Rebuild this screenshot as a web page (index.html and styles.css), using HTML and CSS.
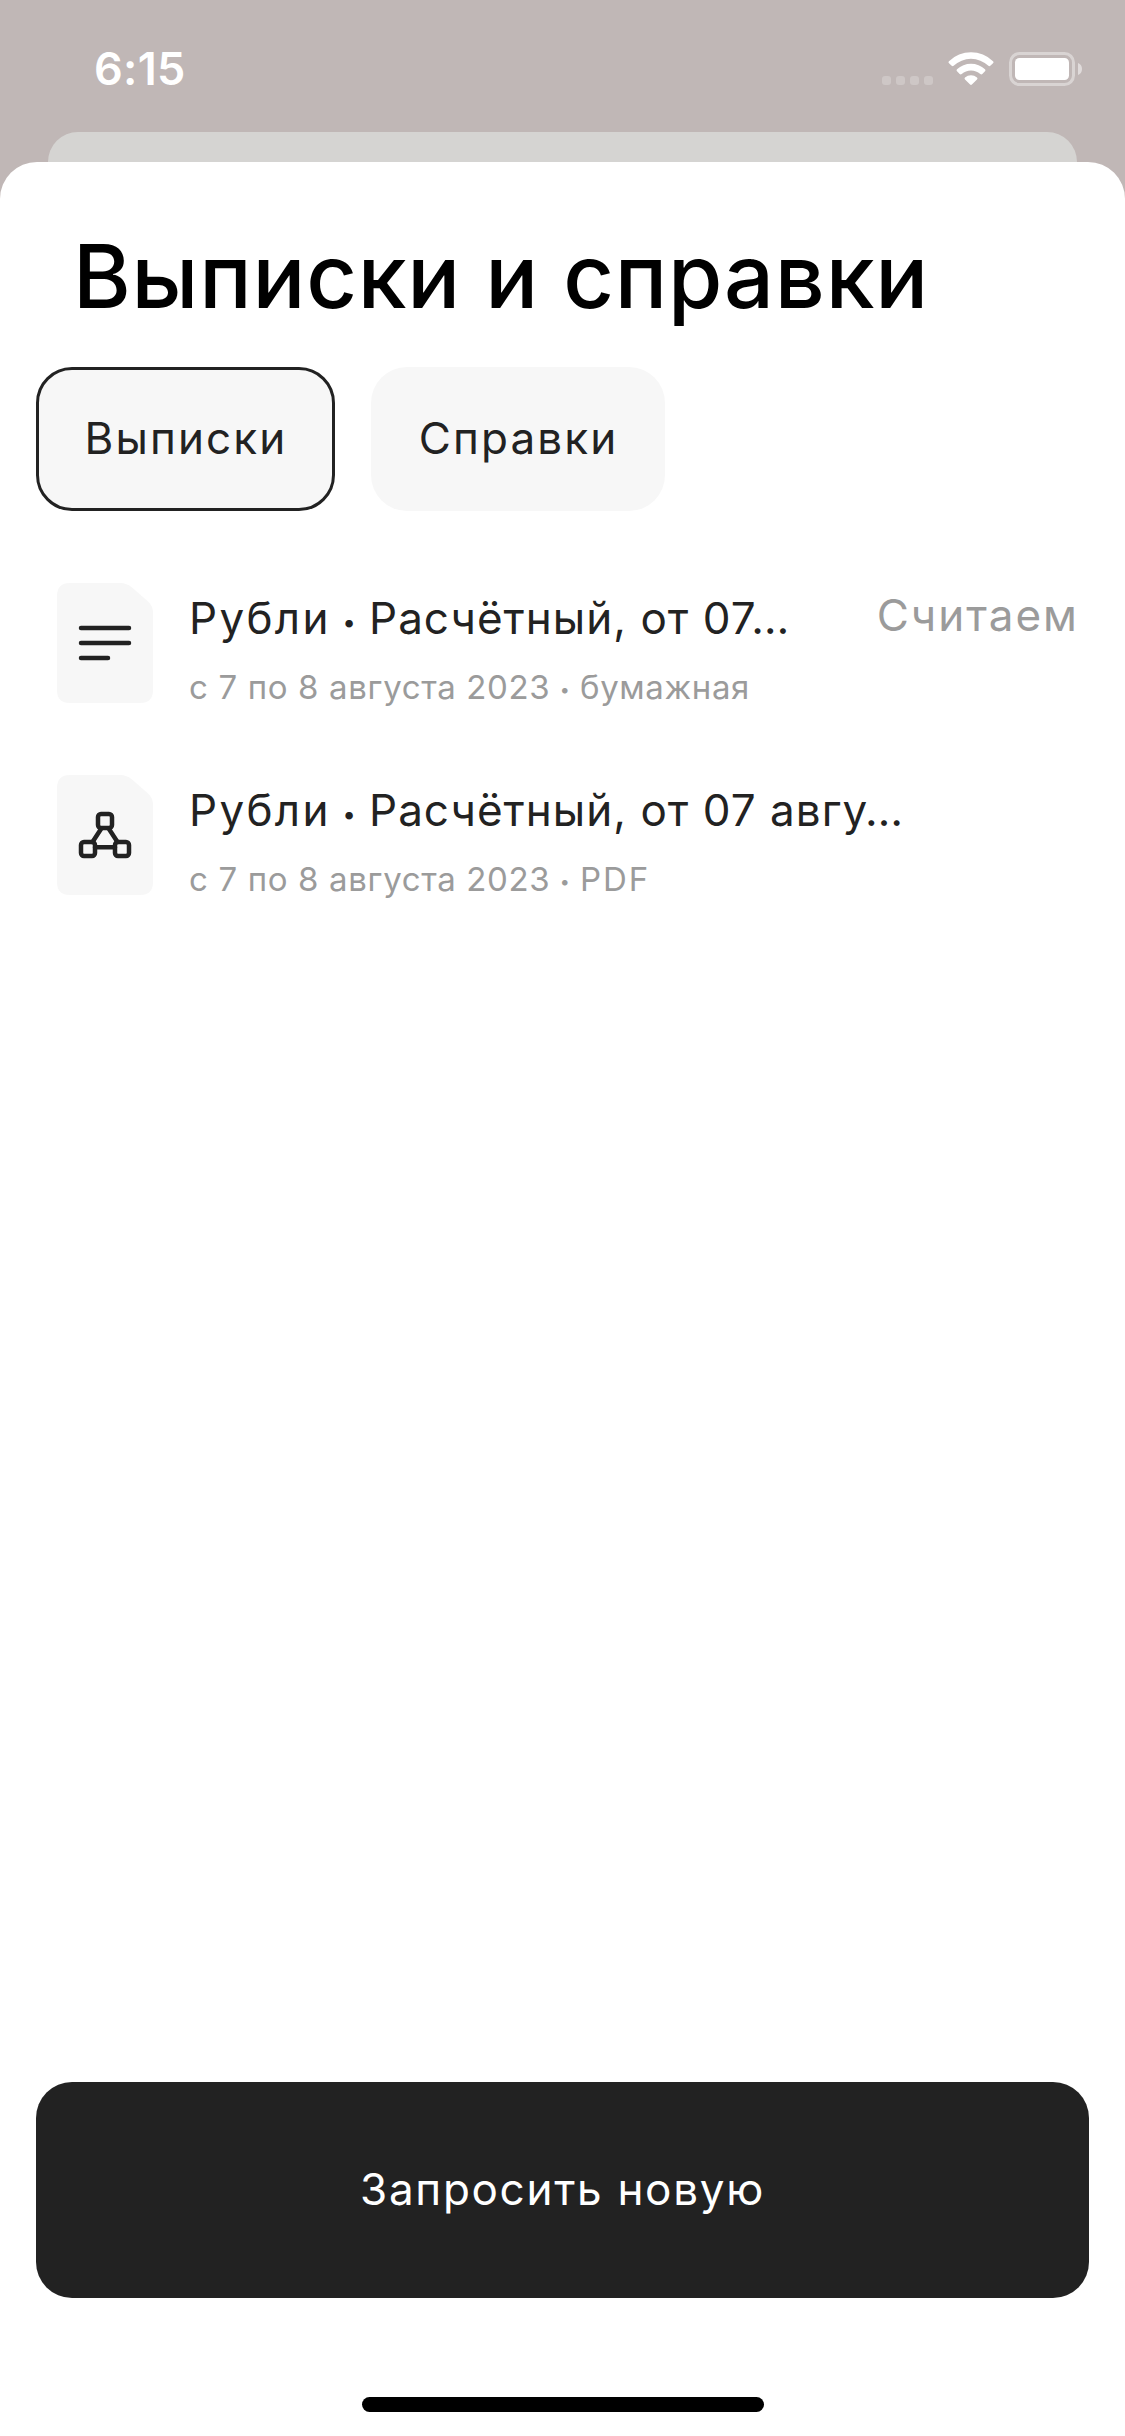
FILE: index.html
```html
<!DOCTYPE html>
<html lang="ru">
<head>
<meta charset="utf-8">
<title>Выписки и справки</title>
<link rel="stylesheet" href="styles.css">
</head>
<body>
<div class="screen">
  <header class="status-bar">
    <span class="time">6:15</span>
    <div class="indicators">
      <svg class="signal" width="51" height="9" viewBox="0 0 51 9" aria-hidden="true">
        <rect width="9" height="9" rx="3"/><rect x="14" width="9" height="9" rx="3"/><rect x="28" width="9" height="9" rx="3"/><rect x="42" width="9" height="9" rx="3"/>
      </svg>
      <svg class="wifi" width="46" height="34" viewBox="0 0 46 34" aria-hidden="true">
        <path d="M1 9.2A31.5 31.5 0 0 1 45 9.2Q46 10.2 45 11.2L42.3 13.8Q41.4 14.7 40.4 13.8A25.2 25.2 0 0 0 5.6 13.8Q4.6 14.7 3.7 13.8L1 11.2Q0 10.2 1 9.2Z"/>
        <path d="M9 17.3A20.3 20.3 0 0 1 37 17.3Q38 18.3 37 19.3L34.3 22Q33.3 22.9 32.3 22A13.8 13.8 0 0 0 13.7 22Q12.7 22.9 11.7 22L9 19.3Q8 18.3 9 17.3Z"/>
        <path d="M17 25.5A9.3 9.3 0 0 1 29 25.5Q30 26.5 29 27.4L23.9 32.5Q23 33.4 22.1 32.5L17 27.4Q16 26.5 17 25.5Z"/>
      </svg>
      <svg class="battery" width="73" height="34" viewBox="0 0 73 34" aria-hidden="true">
        <rect class="battery-case" x="1.5" y="1.5" width="63" height="31" rx="9"/>
        <rect class="battery-level" x="6" y="6" width="54" height="22" rx="4.5"/>
        <path class="battery-cap" d="M69 11Q73 12.700 73 17T69 23Z"/>
      </svg>
    </div>
  </header>
  <div class="back-card"></div>
  <main class="sheet">
    <h1 class="title">Выписки и справки</h1>
    <nav class="tabs">
      <button class="tab tab-active">Выписки</button>
      <button class="tab">Справки</button>
    </nav>
    <ul class="list">
      <li class="row">
        <svg class="doc" width="96" height="120" viewBox="0 0 96 120" aria-hidden="true">
          <path class="doc-page" d="M13 0H63Q70 0 75 4.500L91 18.500Q96 23 96 30V107Q96 120 83 120H13Q0 120 0 107V13Q0 0 13 0Z"/>
          <path class="doc-glyph" d="M24 45H72M24 60H72M24 75H51"/>
        </svg>
        <div class="info">
          <div class="name"><span class="currency">Рубли</span><span class="sep">·</span><span class="account">Расчётный, от 07…</span></div>
          <div class="detail"><span class="period">с 7 по 8 августа 2023</span><span class="sep">·</span><span>бумажная</span></div>
        </div>
        <span class="state">Считаем</span>
      </li>
      <li class="row">
        <svg class="doc" width="96" height="120" viewBox="0 0 96 120" aria-hidden="true">
          <path class="doc-page" d="M13 0H63Q70 0 75 4.500L91 18.500Q96 23 96 30V107Q96 120 83 120H13Q0 120 0 107V13Q0 0 13 0Z"/>
          <g class="doc-glyph">
            <rect x="41" y="39" width="14" height="14" rx="3"/>
            <rect x="24" y="67" width="14" height="14" rx="3"/>
            <rect x="58" y="67" width="14" height="14" rx="3"/>
            <path d="M44 54L35.500 67M52 54L60.500 67M38 72.200H58"/>
          </g>
        </svg>
        <div class="info">
          <div class="name"><span class="currency">Рубли</span><span class="sep">·</span><span class="account">Расчётный, от 07 авгу…</span></div>
          <div class="detail"><span class="period">с 7 по 8 августа 2023</span><span class="sep">·</span><span class="format">PDF</span></div>
        </div>
      </li>
    </ul>
    <button class="request">Запросить новую</button>
    <div class="home-indicator"></div>
  </main>
</div>
</body>
</html>
```

FILE: styles.css
```css
* {
  box-sizing: border-box;
}

body {
  margin: 0;
  font-family: "Inter", "Noto Sans", sans-serif;
  color: #222;
}

.screen {
  display: flex;
  flex-direction: column;
  width: 1125px;
  height: 2436px;
  overflow: hidden;
  background: #c0b7b6;
}

.status-bar {
  display: flex;
  justify-content: space-between;
  flex: none;
  height: 132px;
  padding: 38px 43px 0 93px;
  color: #fff;
}

.time {
  padding: 1px 0 0 1px;
  font-size: 45px;
  font-weight: 600;
  line-height: 60px;
  letter-spacing: 0.3px;
}

.indicators {
  display: flex;
  align-items: flex-end;
  height: 48px;
}

.signal {
  margin: 0 15px 1px 0;
  fill: #fff;
  opacity: 0.22;
}

.wifi {
  margin-right: 15px;
  fill: #fff;
}

.battery-case {
  fill: none;
  stroke: #fff;
  stroke-width: 3;
  opacity: 0.4;
}

.battery-level {
  fill: #fff;
}

.battery-cap {
  fill: #fff;
  opacity: 0.5;
}

.back-card {
  flex: none;
  height: 66px;
  margin: 0 48px -36px;
  border-radius: 30px 30px 0 0;
  background: #d5d4d2;
}

.sheet {
  display: flex;
  flex-direction: column;
  flex: 1;
  z-index: 1;
  padding: 61px 36px 24px;
  border-radius: 37px 37px 0 0;
  background: #fff;
}

.title {
  margin: 0 0 38px 37px;
  font-size: 88px;
  font-weight: 500;
  line-height: 106px;
  letter-spacing: 0.77px;
  white-space: nowrap;
  color: #000;
}

.tabs {
  display: flex;
  gap: 36px;
}

.tab {
  width: 294px;
  height: 144px;
  padding: 0 0 2px 1px;
  border: 0;
  border-radius: 36px;
  background: #f7f7f7;
  color: #222;
  font: 400 44px/52px "Inter", "Noto Sans", sans-serif;
  letter-spacing: 2.1px;
}

.tab-active {
  width: 299px;
  border: 3px solid #222;
}

.list {
  display: flex;
  flex-direction: column;
  flex: 1;
  gap: 72px;
  margin: 72px 0 0;
  padding: 0 11px 0 21px;
  list-style: none;
}

.row {
  display: flex;
  gap: 36px;
  height: 120px;
}

.doc {
  flex: none;
}

.doc-page {
  fill: #f7f7f7;
}

.doc-glyph {
  fill: none;
  stroke: #222;
  stroke-width: 4.5;
  stroke-linecap: round;
}

.info {
  flex: 1;
  padding-top: 9px;
  white-space: nowrap;
}

.name {
  display: flex;
  height: 52px;
  margin-bottom: 23px;
  font-size: 44px;
  line-height: 52px;
}

.currency {
  width: 140px;
  letter-spacing: 2.3px;
}

.account {
  letter-spacing: 1.03px;
}

.sep {
  width: 40px;
  padding-top: 5px;
  font-weight: 700;
  text-align: center;
}

.detail {
  display: flex;
  height: 40px;
  font-size: 33px;
  line-height: 40px;
  letter-spacing: 0.6px;
  color: #9b9b9b;
}

.period {
  width: 361px;
  letter-spacing: 0.65px;
}

.detail .sep {
  width: 30px;
  padding-top: 3px;
}

.format {
  letter-spacing: 1.9px;
}

.state {
  margin-right: -1px;
  padding-top: 6px;
  font-size: 44px;
  line-height: 52px;
  letter-spacing: 2px;
  color: #9b9b9b;
}

.request {
  height: 216px;
  padding: 0 0 2px;
  border: 0;
  border-radius: 36px;
  background: #222;
  color: #fff;
  font: 400 44px/52px "Inter", "Noto Sans", sans-serif;
  letter-spacing: 1.7px;
}

.home-indicator {
  width: 402px;
  height: 15px;
  margin: 99px auto 0;
  border-radius: 8px;
  background: #000;
}
```
